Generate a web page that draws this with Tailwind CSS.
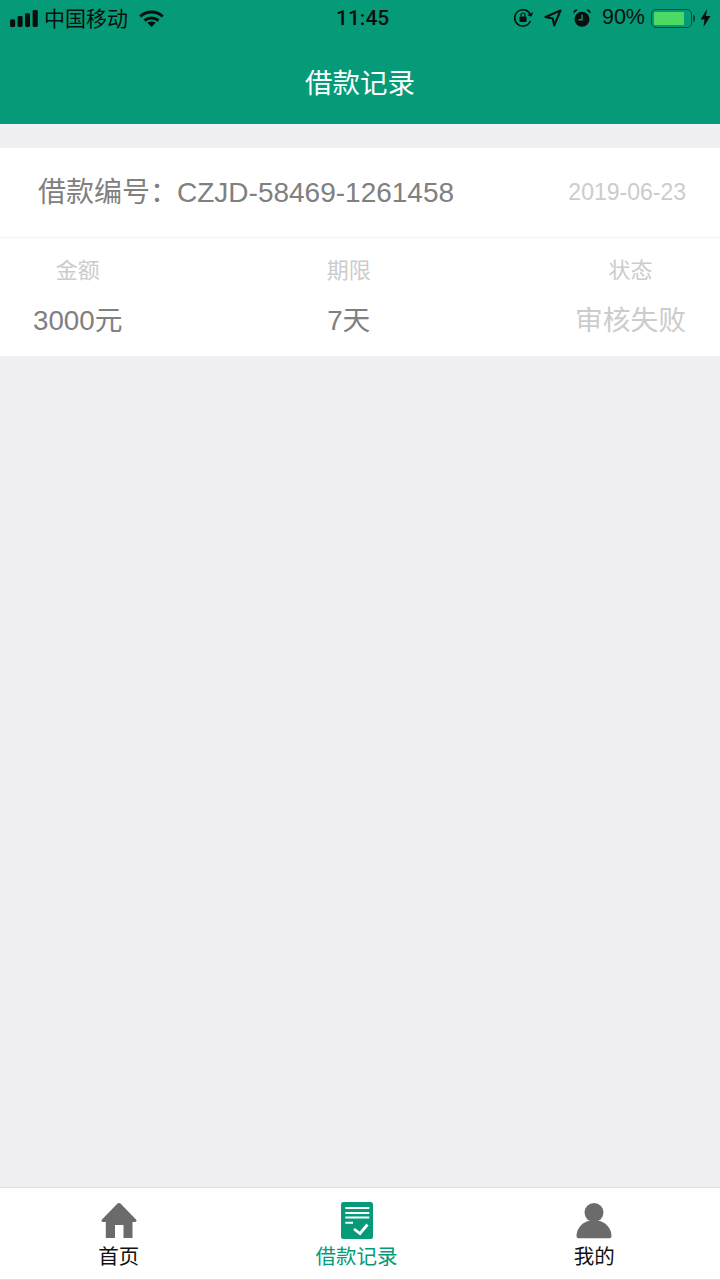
<!DOCTYPE html>
<html lang="zh-CN">
  <head>
    <meta charset="UTF-8" />
    <meta name="viewport" content="width=device-width, initial-scale=1.0" />
    <title>借款记录</title>
    <script src="https://cdn.jsdelivr.net/npm/@tailwindcss/browser@4"></script>
  </head>
  <body class="bg-[#efeff4] font-['Liberation_Sans','Noto_Sans_CJK_SC',sans-serif]">
    <div class="flex h-[1280px] w-[720px] flex-col overflow-hidden">
      <!-- 顶部 -->
      <header class="h-[124px] shrink-0 bg-[#059a78]">
        <div class="relative flex h-9 items-center justify-between pl-[10px] pr-[9px] text-[21px] leading-none text-[#0a0f0d]">
          <div class="flex items-center">
            <svg width="28" height="17" viewBox="0 0 28 17" fill="currentColor">
              <rect x="0" y="9.3" width="5.2" height="7.7" rx="1.6" />
              <rect x="7.6" y="6" width="5" height="11" rx="1.4" />
              <rect x="15" y="3.3" width="5" height="13.7" rx="1.4" />
              <rect x="22.6" y="0" width="5.2" height="17" rx="1.4" />
            </svg>
            <span class="ml-[6px]">中国移动</span>
            <svg class="ml-[11px]" width="25" height="17" viewBox="0 0 25 17" fill="none" stroke="currentColor" stroke-width="3">
              <path d="M1.2 6.5C7.5 0.5 17.5 0.5 23.8 6.5" />
              <path d="M5.5 10.5C9.5 7 15.5 7 19.5 10.5" />
              <path d="M12.5 17L8.3 12.8C10.8 11 14.2 11 16.7 12.8Z" fill="currentColor" stroke="none" />
            </svg>
          </div>
          <span class="absolute left-[336px] top-[7px] font-['Roboto'] font-medium text-[21px] leading-[22px]">11:45</span>
          <div class="flex items-center">
            <svg width="20" height="20" viewBox="0 0 20 20" fill="none" stroke="currentColor" stroke-width="1.5">
              <path d="M17.5 13A8.2 8.2 0 1 1 17.6 7" />
              <path d="M15 6.5L18 7.8L19.5 4.5" stroke-width="1.3" />
              <rect x="6.5" y="8.5" width="7" height="5.5" rx="0.8" fill="currentColor" stroke="none" />
              <path d="M8 8.5V7a2 2 0 0 1 4 0v1.5" stroke-width="1.2" />
            </svg>
            <svg class="ml-[11px]" width="18" height="18" viewBox="0 0 18 18" fill="none" stroke="currentColor" stroke-width="2" stroke-linejoin="round">
              <path d="M16.5 1.5L1.5 8L8.8 9.5L10.2 16.5Z" />
            </svg>
            <svg class="ml-[11px]" width="18" height="18" viewBox="0 0 18 18" fill="currentColor">
              <circle cx="9" cy="10.2" r="7.5" />
              <path d="M0.6 4.5L4.5 1C3 -0.3 -0.2 1.3 0.6 4.5Z" />
              <path d="M17.4 4.5L13.5 1C15 -0.3 18.2 1.3 17.4 4.5Z" />
              <path d="M9 5.5V10.8H5.5" fill="none" stroke="#059a78" stroke-width="1.4" />
            </svg>
            <span class="ml-[11px] text-[21.5px]">90%</span>
            <div class="ml-[6px] flex items-center">
              <div class="h-[19px] w-[41px] rounded-[5px] border-[1.5px] border-[#0a4a3a] p-[2px]">
                <div class="h-full w-[30px] rounded-[1px] bg-[#4cd964]"></div>
              </div>
              <div class="ml-[1px] h-[7px] w-[2px] rounded-r-sm bg-[#0a4a3a]"></div>
            </div>
            <svg class="ml-[5px]" width="11" height="18" viewBox="0 0 11 18" fill="currentColor">
              <path d="M7 0L0.5 10.5H4.5L3.5 18L10.5 7H6Z" />
            </svg>
          </div>
        </div>
        <h1 class="mt-[28px] text-center text-[27.5px] leading-[40px] font-normal text-white">借款记录</h1>
      </header>

      <!-- 记录 -->
      <main class="mt-6 flex-1">
        <div class="bg-white">
          <div class="flex h-[90px] items-center justify-between border-b border-[#f3f3f3] pl-[38px] pr-[34px]">
            <div class="text-[28px] leading-none text-[#808080]">借款编号：<span class="-ml-[1px]">CZJD-58469-1261458</span></div>
            <div class="text-[23px] leading-none text-[#cccccc]">2019-06-23</div>
          </div>
          <div class="flex h-[118px] justify-between pl-[33px] pr-[34px] pt-[21px]">
            <div class="flex flex-col items-center">
              <span class="text-[22px] leading-[24px] text-[#cccccc]">金额</span>
              <span class="mt-[22px] text-[27.75px] leading-[32px] text-[#808080]">3000元</span>
            </div>
            <div class="flex flex-col items-center">
              <span class="text-[22px] leading-[24px] text-[#cccccc]">期限</span>
              <span class="mt-[22px] text-[27.75px] leading-[32px] text-[#808080]">7天</span>
            </div>
            <div class="flex flex-col items-center">
              <span class="text-[22px] leading-[24px] text-[#cccccc]">状态</span>
              <span class="mt-[22px] text-[27.75px] leading-[32px] text-[#cccccc]">审核失败</span>
            </div>
          </div>
        </div>
      </main>

      <!-- 底部导航 -->
      <nav class="flex h-[93px] shrink-0 border-t border-b border-[#e0e0e0] bg-white pr-[7px] text-[20.5px] leading-[24px] text-[#111111]">
        <a class="flex flex-1 flex-col items-center pt-[15px]">
          <svg width="36" height="36" viewBox="0 0 36 36" fill="#6b6b6b">
            <path d="M18 0C17.2 0 16.6 0.4 16 1L1 16.5C0 17.6 0.5 19 2 19H4.8V35H14V22H22.5V35H31.5V19H34C35.5 19 36 17.6 35 16.5L20 1C19.4 0.4 18.8 0 18 0Z" />
          </svg>
          <span class="mt-[6px]">首页</span>
        </a>
        <a class="flex flex-1 flex-col items-center pt-[14px] text-[#059a78]">
          <svg width="32" height="37" viewBox="0 0 32 37">
            <rect width="32" height="37" rx="2.5" fill="#059a78" />
            <path d="M4.3 6H28.3M4.3 11H28.3M4.3 15.5H28.3M4.3 20.7H12" stroke="#fff" stroke-width="2" fill="none" />
            <path d="M13 27L19 31.5L26.5 22.5" stroke="#fff" stroke-width="2.8" fill="none" />
          </svg>
          <span class="mt-[6px]">借款记录</span>
        </a>
        <a class="flex flex-1 flex-col items-center pt-[15px]">
          <svg width="36" height="36" viewBox="0 0 36 36" fill="#6b6b6b">
            <circle cx="18" cy="9.5" r="9.5" />
            <path d="M0.5 33C0.5 26 5.5 20 12 18H24C30.5 20 35.5 26 35.5 33C35.5 34.5 34.5 35.2 33.5 35.2H2.5C1.5 35.2 0.5 34.5 0.5 33Z" />
          </svg>
          <span class="mt-[6px]">我的</span>
        </a>
      </nav>
    </div>
  </body>
</html>
